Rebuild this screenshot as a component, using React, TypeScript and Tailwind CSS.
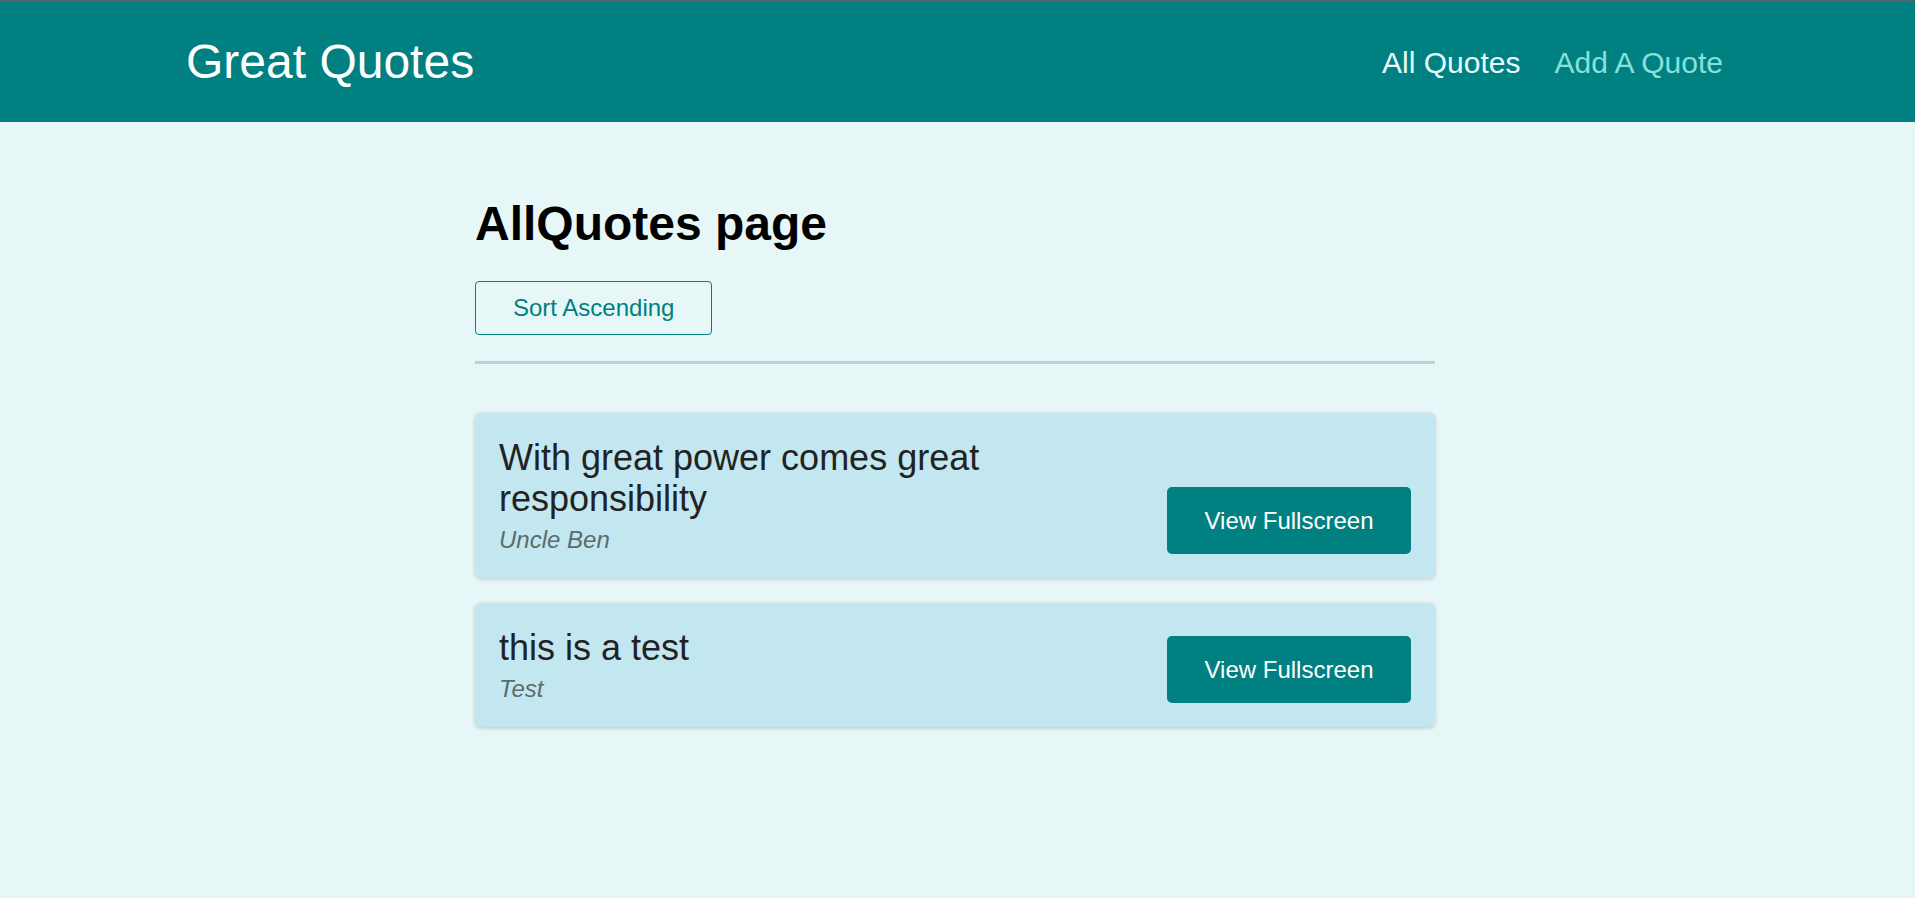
import React from 'react'

type Quote = {
    id: string
    text: string
    author: string
}

const QUOTES: Quote[] = [
    { id: 'q1', text: 'With great power comes great responsibility', author: 'Uncle Ben' },
    { id: 'q2', text: 'this is a test', author: 'Test' },
]

const QuoteItem = ({ quote }: { quote: Quote }) => {
    return (
        <li className="flex items-end justify-between rounded-[6px] bg-[#c2e7f0] p-6 shadow-[0_1px_4px_rgba(0,0,0,0.2)]">
            <figure className="max-w-[560px]">
                <blockquote className="mb-[6px] text-[36px] leading-[41px] text-[#222]">
                    <p>{quote.text}</p>
                </blockquote>
                <figcaption className="text-[24px] italic leading-[29px] text-[#5c6b6b]">{quote.author}</figcaption>
            </figure>
            <a className="flex h-[67px] w-[244px] items-center justify-center rounded-[5px] bg-[#008080] text-[24px] text-white">
                View Fullscreen
            </a>
        </li>
    )
}

const App = () => {
    return (
        <div className="min-h-screen bg-[#e7f7f7] font-['Liberation_Sans',Arial,sans-serif]">
            <div className="h-[2px] bg-[#5b6064]" />
            <header className="flex h-[120px] items-center justify-between bg-[#008080] pl-[186px] pr-[192px]">
                <div className="text-[48px] text-white">Great Quotes</div>
                <nav>
                    <ul className="flex gap-[34px] text-[30px]">
                        <li className="text-[#e6fcfc]">All Quotes</li>
                        <li className="text-[#88e0dc]">Add A Quote</li>
                    </ul>
                </nav>
            </header>
            <div className="pr-[5px]">
                <main className="mx-auto w-[960px] pt-[74px]">
                    <h1 className="text-[48px] font-bold leading-[55px] text-black">AllQuotes page</h1>
                    <div className="mt-[30px] border-b-[3px] border-[#b2d7d7] pb-[26px]">
                        <button className="h-[54px] rounded-[4px] border border-[#008080] px-[37px] text-[24px] text-[#008080]">
                            Sort Ascending
                        </button>
                    </div>
                    <ul className="mt-[49px] flex flex-col gap-[25px]">
                        {QUOTES.map((q) => (
                            <QuoteItem key={q.id} quote={q} />
                        ))}
                    </ul>
                </main>
            </div>
        </div>
    )
}

export default App
